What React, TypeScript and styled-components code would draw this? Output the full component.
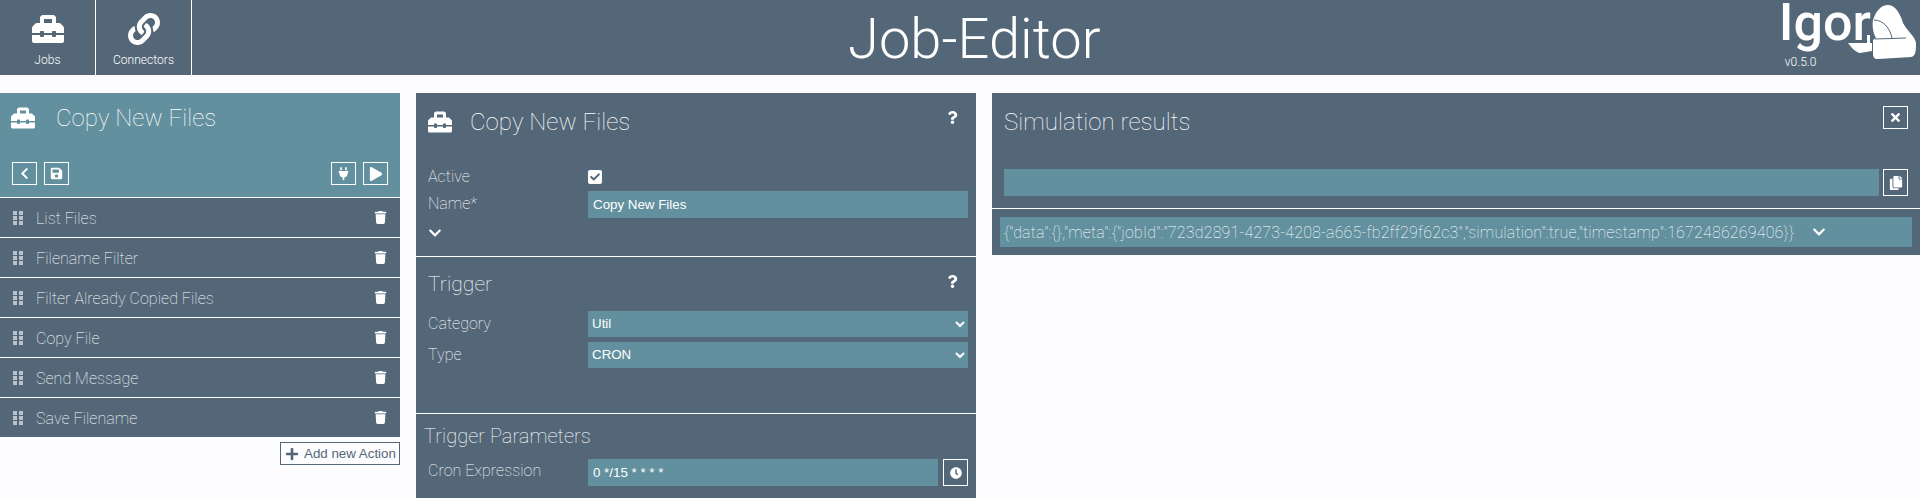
import styled, { createGlobalStyle } from "styled-components";
import {
  FaCheck,
  FaChevronDown,
  FaChevronLeft,
  FaClock,
  FaCopy,
  FaLink,
  FaPlay,
  FaPlug,
  FaPlus,
  FaQuestion,
  FaSave,
  FaTimes,
  FaToolbox,
  FaTrash,
} from "react-icons/fa";

const DARK = "#546778";
const TEAL = "#62909e";

const actions = ["List Files", "Filename Filter", "Filter Already Copied Files", "Copy File", "Send Message", "Save Filename"];

const GlobalStyle = createGlobalStyle`
  html, body {
    margin: 0;
    height: 498px;
    overflow: hidden;
    background: #fdfdff;
    font-family: Roboto, "Liberation Sans", sans-serif;
    font-weight: 270;
    letter-spacing: 0.05px;
    color: #fff;
  }
  * { box-sizing: border-box; }
`;

const Header = styled.header`
  display: flex;
  align-items: stretch;
  justify-content: space-between;
  height: 75px;
  background: ${DARK};
  position: relative;
`;

const Nav = styled.nav`
  display: flex;
`;

const NavItem = styled.div`
  width: 96px;
  border-right: 1px solid #fff;
  display: flex;
  flex-direction: column;
  align-items: center;
  padding-top: 13px;
  font-size: 12px;
  font-weight: 300;
  svg {
    font-size: 32px;
    color: #fff;
    margin-bottom: 8px;
  }
`;

const PageTitle = styled.h1`
  position: absolute;
  left: 848px;
  top: 0;
  margin: 0;
  font-size: 56px;
  font-weight: 300;
  line-height: 79px;
`;

const Logo = styled.div`
  display: flex;
  margin-right: 4px;
`;

const LogoText = styled.div`
  display: flex;
  flex-direction: column;
`;

const LogoName = styled.div`
  font-size: 52px;
  font-weight: 500;
  line-height: 46px;
`;

const Version = styled.div`
  font-size: 12px;
  font-weight: 300;
  padding-left: 6px;
  margin-top: 9px;
`;

const LogoHand = styled.svg`
  width: 68px;
  height: 62px;
  margin-left: -23px;
`;

const Main = styled.main`
  display: grid;
  grid-template-columns: 400px 560px 928px;
  column-gap: 16px;
  padding-top: 18px;
`;

const JobHead = styled.div`
  background: ${TEAL};
  height: 104px;
  display: flex;
  flex-direction: column;
  justify-content: space-between;
  padding: 10px 12px 12px 0;
`;

const JobTitle = styled.div`
  display: flex;
  align-items: center;
  gap: 21px;
  padding-left: 11px;
  font-size: 24px;
  line-height: 30px;
  svg {
    font-size: 24px;
  }
`;

const Toolbar = styled.div`
  display: flex;
  justify-content: space-between;
  padding-left: 12px;
`;

const ToolGroup = styled.div`
  display: flex;
  gap: 7px;
`;

const IconButton = styled.div<{ $h?: number; $size?: number }>`
  width: 25px;
  height: ${(p) => p.$h ?? 23}px;
  border: 1px solid #fff;
  display: flex;
  align-items: center;
  justify-content: center;
  flex-shrink: 0;
  font-size: ${(p) => p.$size ?? 13}px;
`;

const ActionList = styled.div`
  display: flex;
  flex-direction: column;
`;

const ActionRow = styled.div`
  height: 40px;
  background: ${DARK};
  border-top: 1px solid #fff;
  display: flex;
  align-items: center;
  padding: 0 13px;
  font-size: 16px;
`;

const Grip = styled.svg`
  width: 10px;
  height: 14px;
  margin-right: 13px;
  fill: #b9c2ca;
`;

const ActionName = styled.span`
  flex: 1;
  padding-top: 2px;
`;

const AddRow = styled.div`
  display: flex;
  justify-content: flex-end;
  margin-top: 5px;
`;

const AddButton = styled.div`
  width: 120px;
  height: 23px;
  border: 1px solid ${DARK};
  display: flex;
  align-items: center;
  gap: 5px;
  padding-left: 4px;
  color: ${DARK};
  font-family: "Liberation Sans", sans-serif;
  font-weight: 400;
  font-size: 13.33px;
  letter-spacing: 0;
  white-space: nowrap;
`;

const Panel = styled.section`
  background: ${DARK};
`;

const Section = styled.div<{ $h: number }>`
  height: ${(p) => p.$h}px;
  padding: 0 8px 0 12px;
  & + & {
    border-top: 1px solid #fff;
  }
`;

const SectionHead = styled.div<{ $top: number; $left?: number }>`
  display: flex;
  align-items: center;
  justify-content: space-between;
  padding-top: ${(p) => p.$top}px;
  margin-left: ${(p) => p.$left ?? 0}px;
`;

const SectionTitle = styled.h2<{ $size?: number }>`
  display: flex;
  align-items: center;
  gap: 18px;
  margin: 0;
  font-size: ${(p) => p.$size ?? 24}px;
  font-weight: 270;
  line-height: 28px;
  svg {
    font-size: 24px;
  }
`;

const Help = styled(FaQuestion)<{ $up: number }>`
  font-size: 13px;
  margin-right: 9px;
  margin-top: -${(p) => p.$up}px;
`;

const Field = styled.div<{ $h: number; $mt?: number }>`
  display: grid;
  grid-template-columns: 160px 1fr;
  align-items: center;
  height: ${(p) => p.$h}px;
  margin-top: ${(p) => p.$mt ?? 0}px;
  font-size: 16px;
`;

const RaisedLabel = styled.span<{ $by: number }>`
  margin-top: -${(p) => p.$by}px;
`;

const Check = styled.div`
  width: 14px;
  height: 14px;
  background: #fff;
  border-radius: 2px;
  color: ${DARK};
  font-size: 10px;
  display: flex;
  align-items: center;
  justify-content: center;
`;

const TextInput = styled.input`
  width: 100%;
  height: 100%;
  background: ${TEAL};
  border: none;
  outline: none;
  padding: 0 5px;
  color: #fff;
  font-family: "Liberation Sans", sans-serif;
  font-size: 13.33px;
`;

const Select = styled.select`
  width: 100%;
  height: 100%;
  background: ${TEAL};
  border: none;
  outline: none;
  padding-bottom: 2px;
  color: #fff;
  font-family: "Liberation Sans", sans-serif;
  font-size: 13.33px;
`;

const Expand = styled(FaChevronDown)`
  display: block;
  font-size: 14px;
  margin-top: 8px;
`;

const InputGroup = styled.div`
  display: flex;
  gap: 5px;
  height: 100%;
  min-width: 0;
`;

const ResultRow = styled.div`
  height: 30px;
  margin: 8px 8px 0;
  background: ${TEAL};
  display: flex;
  align-items: center;
  padding-left: 4px;
  font-size: 16px;
  letter-spacing: 0.2px;
  white-space: nowrap;
  svg {
    font-size: 14px;
    margin-left: 18px;
    color: #fff;
  }
`;

const ResultPanel = styled(Panel)`
  height: 162px;
`;

const ResultInput = styled(InputGroup)`
  height: 27px;
  margin: 0 12px;
  gap: 4px;
`;

const ResultHead = styled.div`
  height: 76px;
  padding: 13px 12px 0;
  display: flex;
  align-items: flex-start;
  justify-content: space-between;
`;

const ResultTitle = styled(SectionTitle)`
  margin-top: 2px;
`;

const ResultDivider = styled.div`
  height: 13px;
  border-bottom: 1px solid #fff;
`;

const GripIcon = () => (
  <Grip viewBox="0 0 10 14">
    <rect x="0" y="0" width="4" height="4" />
    <rect x="6" y="0" width="4" height="4" />
    <rect x="0" y="5" width="4" height="4" />
    <rect x="6" y="5" width="4" height="4" />
    <rect x="0" y="10" width="4" height="4" />
    <rect x="6" y="10" width="4" height="4" />
  </Grip>
);

export default function App() {
  return (
    <>
      <GlobalStyle />
      <Header>
        <Nav>
          <NavItem>
            <FaToolbox />
            Jobs
          </NavItem>
          <NavItem>
            <FaLink />
            Connectors
          </NavItem>
        </Nav>
        <PageTitle>Job-Editor</PageTitle>
        <Logo>
          <LogoText>
            <LogoName>Igor</LogoName>
            <Version>v0.5.0</Version>
          </LogoText>
          <LogoHand viewBox="0 0 68 62">
            <path
              fill="#fff"
              d="M25 20C28 11 33 5 40 5C47 5 52 13 55 23C59 31 67 36 68 43C68 50 68 56 63 57L30 59C26 59 25 57 25 53L25 40L28 38C25 33 24 26 25 20z"
            />
            <path fill="#fff" d="M0 43L19 43L19 35L22 35L22 43L24 43L24 51L12 53C7 52 3 47 0 43z" />
            <path fill="none" stroke={DARK} strokeWidth="1" d="M26 20C35 20 42 28 44 38M27 39L58 38" />
          </LogoHand>
        </Logo>
      </Header>
      <Main>
        <div>
          <JobHead>
            <JobTitle>
              <FaToolbox />
              Copy New Files
            </JobTitle>
            <Toolbar>
              <ToolGroup>
                <IconButton>
                  <FaChevronLeft />
                </IconButton>
                <IconButton>
                  <FaSave />
                </IconButton>
              </ToolGroup>
              <ToolGroup>
                <IconButton>
                  <FaPlug />
                </IconButton>
                <IconButton $size={14}>
                  <FaPlay />
                </IconButton>
              </ToolGroup>
            </Toolbar>
          </JobHead>
          <ActionList>
            {actions.map((name) => (
              <ActionRow key={name}>
                <GripIcon />
                <ActionName>{name}</ActionName>
                <FaTrash size={13} />
              </ActionRow>
            ))}
          </ActionList>
          <AddRow>
            <AddButton>
              <FaPlus size={14} />
              Add new Action
            </AddButton>
          </AddRow>
        </div>

        <Panel>
          <Section $h={163}>
            <SectionHead $top={15}>
              <SectionTitle>
                <FaToolbox />
                Copy New Files
              </SectionTitle>
              <Help $up={9} />
            </SectionHead>
            <Field $h={27} $mt={27}>
              <span>Active</span>
              <Check>
                <FaCheck />
              </Check>
            </Field>
            <Field $h={27} $mt={1}>
              <RaisedLabel $by={2}>Name*</RaisedLabel>
              <TextInput defaultValue="Copy New Files" />
            </Field>
            <Expand />
          </Section>
          <Section $h={157}>
            <SectionHead $top={13}>
              <SectionTitle $size={21}>Trigger</SectionTitle>
              <Help $up={5} />
            </SectionHead>
            <Field $h={26} $mt={13}>
              <RaisedLabel $by={2}>Category</RaisedLabel>
              <Select defaultValue="Util">
                <option>Util</option>
              </Select>
            </Field>
            <Field $h={26} $mt={5}>
              <RaisedLabel $by={2}>Type</RaisedLabel>
              <Select defaultValue="CRON">
                <option>CRON</option>
              </Select>
            </Field>
          </Section>
          <Section $h={85}>
            <SectionHead $top={8} $left={-4}>
              <SectionTitle $size={20}>Trigger Parameters</SectionTitle>
            </SectionHead>
            <Field $h={27} $mt={9}>
              <RaisedLabel $by={5}>Cron Expression</RaisedLabel>
              <InputGroup>
                <TextInput defaultValue="0 */15 * * * *" />
                <IconButton $h={27} $size={12}>
                  <FaClock />
                </IconButton>
              </InputGroup>
            </Field>
          </Section>
        </Panel>

        <ResultPanel>
          <ResultHead>
            <ResultTitle>Simulation results</ResultTitle>
            <IconButton>
              <FaTimes />
            </IconButton>
          </ResultHead>
          <ResultInput>
            <TextInput />
            <IconButton $h={27} $size={14}>
              <FaCopy />
            </IconButton>
          </ResultInput>
          <ResultDivider />
          <ResultRow>
            {'{"data":{},"meta":{"jobId":"723d2891-4273-4208-a665-fb2ff29f62c3","simulation":true,"timestamp":1672486269406}}'}
            <FaChevronDown />
          </ResultRow>
        </ResultPanel>
      </Main>
    </>
  );
}
